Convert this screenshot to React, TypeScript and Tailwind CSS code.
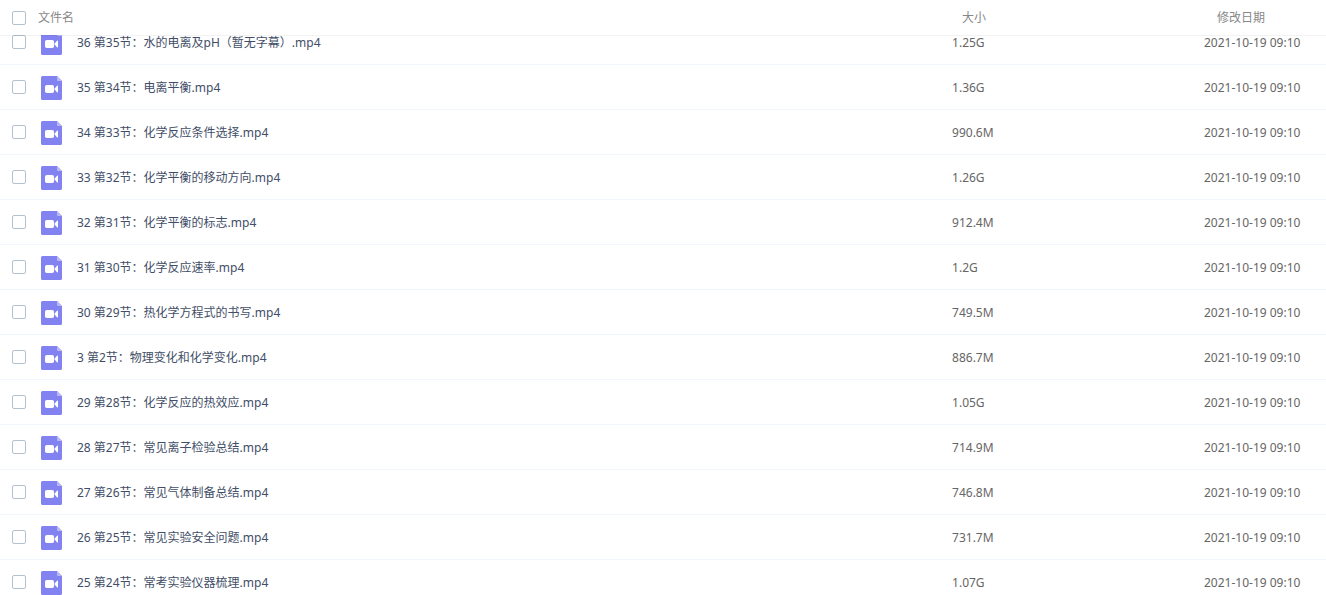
import { useLayoutEffect, useRef, useState } from 'react'

type FileItem = { name: string; size: string; date: string }

const files: FileItem[] = [
    { name: '36 第35节：水的电离及pH（暂无字幕）.mp4', size: '1.25G', date: '2021-10-19 09:10' },
    { name: '35 第34节：电离平衡.mp4', size: '1.36G', date: '2021-10-19 09:10' },
    { name: '34 第33节：化学反应条件选择.mp4', size: '990.6M', date: '2021-10-19 09:10' },
    { name: '33 第32节：化学平衡的移动方向.mp4', size: '1.26G', date: '2021-10-19 09:10' },
    { name: '32 第31节：化学平衡的标志.mp4', size: '912.4M', date: '2021-10-19 09:10' },
    { name: '31 第30节：化学反应速率.mp4', size: '1.2G', date: '2021-10-19 09:10' },
    { name: '30 第29节：热化学方程式的书写.mp4', size: '749.5M', date: '2021-10-19 09:10' },
    { name: '3 第2节：物理变化和化学变化.mp4', size: '886.7M', date: '2021-10-19 09:10' },
    { name: '29 第28节：化学反应的热效应.mp4', size: '1.05G', date: '2021-10-19 09:10' },
    { name: '28 第27节：常见离子检验总结.mp4', size: '714.9M', date: '2021-10-19 09:10' },
    { name: '27 第26节：常见气体制备总结.mp4', size: '746.8M', date: '2021-10-19 09:10' },
    { name: '26 第25节：常见实验安全问题.mp4', size: '731.7M', date: '2021-10-19 09:10' },
    { name: '25 第24节：常考实验仪器梳理.mp4', size: '1.07G', date: '2021-10-19 09:10' },
]

const checkboxClass =
    'block size-[14px] shrink-0 appearance-none rounded-xs border border-[#b4c1d0] bg-white checked:border-[#8283f0] checked:bg-[#8283f0]'

function VideoIcon() {
    return (
        <svg width="21" height="24" viewBox="0 0 21 24" className="shrink-0" aria-hidden="true">
            <path d="M1.5 0H16L21 5V22.5A1.5 1.5 0 0 1 19.5 24H1.5A1.5 1.5 0 0 1 0 22.5V1.5A1.5 1.5 0 0 1 1.5 0Z" fill="#8283f0" />
            <path d="M16 0L21 5H17A1 1 0 0 1 16 4Z" fill="#b9b9f8" />
            <rect x="4" y="9" width="9" height="8" rx="1.8" fill="#fff" />
            <path d="M13.6 12.4L16 9.8Q17 9 17 10V16Q17 17 16 16.2L13.6 13.6Z" fill="#fff" />
        </svg>
    )
}

function App() {
    const listRef = useRef<HTMLDivElement>(null)
    const [selected, setSelected] = useState<string[]>([])

    // the list opens slightly scrolled under its header
    useLayoutEffect(() => {
        if (listRef.current) listRef.current.scrollTop = 16
    }, [])

    const toggle = (name: string) => {
        setSelected(selected.includes(name) ? selected.filter((n) => n !== name) : [...selected, name])
    }

    const toggleAll = () => {
        setSelected(selected.length === files.length ? [] : files.map((f) => f.name))
    }

    const headClass = 'sticky top-0 z-10 h-9 border-b border-black/5 bg-white bg-clip-padding p-0 text-left font-normal text-[#888888]'
    const cellClass = 'h-[45px] border-b border-[#f2f6fd] p-0 pt-[2px] whitespace-nowrap text-[#666666]'

    return (
        <div
            ref={listRef}
            className="h-screen overflow-y-auto bg-white font-['Noto_Sans','Noto_Sans_CJK_SC',sans-serif] text-xs [scrollbar-width:none]"
        >
            <table className="w-full table-fixed border-separate border-spacing-0">
                <colgroup>
                    <col />
                    <col className="w-[19%]" />
                    <col className="w-[122px]" />
                </colgroup>
                <thead>
                    <tr>
                        <th className={headClass}>
                            <label className="flex items-center gap-3 pl-3">
                                <input type="checkbox" className={checkboxClass} checked={selected.length === files.length} onChange={toggleAll} />
                                文件名
                            </label>
                        </th>
                        <th className={`${headClass} pl-[10px]!`}>大小</th>
                        <th className={`${headClass} pl-[13px]!`}>修改日期</th>
                    </tr>
                </thead>
                <tbody>
                    {files.map((file) => (
                        <tr key={file.name}>
                            <td className={cellClass}>
                                <label className="flex items-start pl-3 text-[#424e67]">
                                    <input type="checkbox" className={`${checkboxClass} mt-1`} checked={selected.includes(file.name)} onChange={() => toggle(file.name)} />
                                    <span className="flex items-center gap-[15px] pl-[15px]">
                                        <VideoIcon />
                                        {file.name}
                                    </span>
                                </label>
                            </td>
                            <td className={cellClass}>{file.size}</td>
                            <td className={cellClass}>{file.date}</td>
                        </tr>
                    ))}
                </tbody>
            </table>
        </div>
    )
}

export default App
